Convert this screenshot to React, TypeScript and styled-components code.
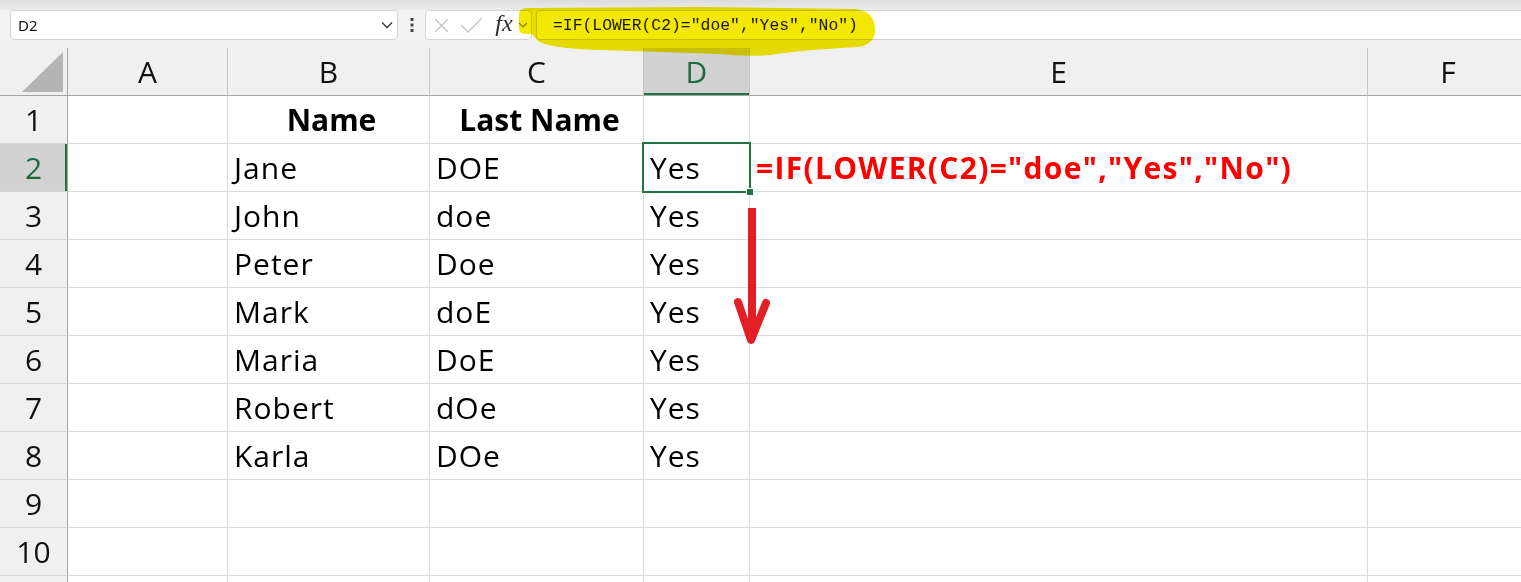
import React from "react";
import styled, { createGlobalStyle } from "styled-components";

const GlobalStyle = createGlobalStyle`
  html, body { margin: 0; padding: 0; background: #ffffff; }
  body { overflow: hidden; }
  * { box-sizing: border-box; }
`;

const Page = styled.div`
  position: relative;
  width: 1521px;
  height: 582px;
  overflow: hidden;
  background: #f0f0f0;
`;

const TopBand = styled.div`
  height: 10px;
  background: linear-gradient(#dcdcdc, #ececec);
`;

const FormulaBar = styled.div`
  display: flex;
  align-items: stretch;
  height: 30px;
  background: #f3f3f3;
`;

const NameBox = styled.div`
  margin-left: 10px;
  width: 388px;
  display: flex;
  align-items: center;
  justify-content: space-between;
  padding: 0 4px 0 7px;
  background: #ffffff;
  border: 1px solid #d4d4d4;
  border-radius: 4px;
  font-family: "Noto Sans", "Open Sans", sans-serif;
  font-size: 15px;
  color: #111;
`;

const Dots = styled.div`
  width: 27px;
  display: flex;
  align-items: center;
  justify-content: center;
`;

const FxGroup = styled.div`
  width: 107px;
  display: flex;
  align-items: center;
  padding-left: 7px;
  background: #ffffff;
  border: 1px solid #d4d4d4;
  border-radius: 4px;
`;

const FxIcon = styled.span<{ $w: number }>`
  width: ${(p) => p.$w}px;
  flex: none;
  display: flex;
  align-items: center;
  justify-content: center;
`;

const FxText = styled.span`
  font-family: "Liberation Serif", "DejaVu Serif", serif;
  font-style: italic;
  font-size: 24px;
  color: #2b2b2b;
  width: 22px;
  flex: none;
  text-align: center;
  line-height: 1;
  margin-top: -4px;
`;

const FormulaInput = styled.div`
  flex: 1;
  margin-left: 4px;
  background: #ffffff;
  border-top: 1px solid #d0d0d0;
  border-bottom: 1px solid #d0d0d0;
  border-left: 1px solid #d0d0d0;
  border-radius: 4px 0 0 4px;
  display: flex;
  align-items: center;
  padding-left: 16px;
  font-family: "Liberation Mono", "DejaVu Sans Mono", monospace;
  font-size: 16.4px;
  color: #1a1a1a;
  white-space: pre;
`;

const Spacer = styled.div`
  height: 8px;
  background: #f0f0f0;
`;

const Sheet = styled.div`
  display: grid;
  grid-template-columns: 68px 160px 202px 214px 106px 618px 1fr;
  grid-auto-rows: 48px;
  background: #ffffff;
  font-family: "Open Sans", "Noto Sans", sans-serif;
  font-size: 30px;
  color: #000;
`;

const Corner = styled.div`
  background: #f0f0f0;
  border-right: 1px solid #a6a6a6;
  border-bottom: 1px solid #a6a6a6;
  display: flex;
  align-items: flex-end;
  justify-content: flex-end;
  padding: 0 4px 3px 0;
`;

const ColHeader = styled.div<{ $active?: boolean; $last?: boolean }>`
  background: ${(p) => (p.$active ? "#d2d2d2" : "#f0f0f0")};
  color: ${(p) => (p.$active ? "#1e6b41" : "#111")};
  border-right: ${(p) => (p.$last ? "none" : "1px solid #c6c6c6")};
  border-bottom: 1px solid #a6a6a6;
  box-shadow: ${(p) => (p.$active ? "inset 0 -2px 0 #217346" : "none")};
  padding-left: ${(p) => (p.$last ? "7px" : "0")};
  text-align: center;
  line-height: 47px;
`;

const RowHeader = styled.div<{ $active?: boolean }>`
  background: ${(p) => (p.$active ? "#d2d2d2" : "#f0f0f0")};
  color: ${(p) => (p.$active ? "#1e6b41" : "#111")};
  border-right: 1px solid #a6a6a6;
  border-bottom: 1px solid #d4d4d4;
  box-shadow: ${(p) => (p.$active ? "inset -2px 0 0 #217346" : "none")};
  text-align: center;
  line-height: 47px;
`;

const Cell = styled.div<{
  $bold?: boolean;
  $center?: boolean;
  $selected?: boolean;
  $red?: boolean;
  $last?: boolean;
}>`
  position: relative;
  border-right: ${(p) => (p.$last ? "none" : "1px solid #dadada")};
  border-bottom: 1px solid #dadada;
  padding: 0 0 0 6px;
  line-height: 47px;
  white-space: nowrap;
  overflow: visible;
  font-weight: ${(p) => (p.$bold || p.$red ? 700 : 400)};
  text-align: ${(p) => (p.$center ? "center" : "left")};
  color: ${(p) => (p.$red ? "#ff0000" : "#000")};
  letter-spacing: ${(p) => (p.$red ? "1.3px" : p.$bold ? "0px" : "1px")};
  z-index: ${(p) => (p.$selected ? 2 : "auto")};
  ${(p) =>
    p.$selected
      ? `
    &::after {
      content: "";
      position: absolute;
      left: -2px;
      top: -2px;
      right: -2px;
      bottom: -2px;
      border: 2px solid #217346;
      pointer-events: none;
    }
    &::before {
      content: "";
      position: absolute;
      right: -4px;
      bottom: -4px;
      width: 6px;
      height: 6px;
      background: #217346;
      box-shadow: 0 0 0 1px #ffffff;
      z-index: 3;
    }
  `
      : ""}
`;

const Overlay = styled.svg`
  position: absolute;
  left: 0;
  top: 0;
  pointer-events: none;
`;

const HighlightOverlay = styled(Overlay)`
  mix-blend-mode: multiply;
`;

type Row = { n: number; label: string; b: string; c: string; d: string; e?: string };

const rows: Row[] = [
  { n: 1, label: "1", b: "Name", c: "Last Name", d: "" },
  { n: 2, label: "2", b: "Jane", c: "DOE", d: "Yes", e: '=IF(LOWER(C2)="doe","Yes","No")' },
  { n: 3, label: "3", b: "John", c: "doe", d: "Yes" },
  { n: 4, label: "4", b: "Peter", c: "Doe", d: "Yes" },
  { n: 5, label: "5", b: "Mark", c: "doE", d: "Yes" },
  { n: 6, label: "6", b: "Maria", c: "DoE", d: "Yes" },
  { n: 7, label: "7", b: "Robert", c: "dOe", d: "Yes" },
  { n: 8, label: "8", b: "Karla", c: "DOe", d: "Yes" },
  { n: 9, label: "9", b: "", c: "", d: "" },
  { n: 10, label: "10", b: "", c: "", d: "" },
  { n: 11, label: "", b: "", c: "", d: "" },
];

const cols = ["A", "B", "C", "D", "E", "F"];

export default function App() {
  return (
    <>
      <GlobalStyle />
      <Page>
        <TopBand />
        <FormulaBar>
          <NameBox>
            <span>D2</span>
            <svg width="12" height="8" viewBox="0 0 12 8">
              <path d="M1 1.5 L6 6.5 L11 1.5" fill="none" stroke="#333" strokeWidth="1.3" />
            </svg>
          </NameBox>
          <Dots>
            <svg width="4" height="16" viewBox="0 0 4 16">
              <rect x="0.5" y="1" width="3" height="3" fill="#444" />
              <rect x="0.5" y="6.5" width="3" height="3" fill="#444" />
              <rect x="0.5" y="12" width="3" height="3" fill="#444" />
            </svg>
          </Dots>
          <FxGroup>
            <FxIcon $w={16}>
              <svg width="15" height="15" viewBox="0 0 15 15">
                <path d="M1 1 L14 14 M14 1 L1 14" stroke="#c4c4c4" strokeWidth="1.3" />
              </svg>
            </FxIcon>
            <FxIcon $w={44}>
              <svg width="23" height="16" viewBox="0 0 23 16">
                <path d="M1 8 L8 15 L22 1" fill="none" stroke="#c4c4c4" strokeWidth="1.3" />
              </svg>
            </FxIcon>
            <FxText>fx</FxText>
            <FxIcon $w={16}>
              <svg width="10" height="6" viewBox="0 0 10 6">
                <path d="M1 1 L5 5 L9 1" fill="none" stroke="#8a8a8a" strokeWidth="1.1" />
              </svg>
            </FxIcon>
          </FxGroup>
          <FormulaInput>=IF(LOWER(C2)="doe","Yes","No")</FormulaInput>
        </FormulaBar>
        <Spacer />
        <Sheet>
          <Corner>
            <svg width="41" height="40" viewBox="0 0 41 40">
              <polygon points="0,40 41,40 41,0" fill="#b4b4b4" />
            </svg>
          </Corner>
          {cols.map((c, i) => (
            <ColHeader key={c} $active={c === "D"} $last={i === cols.length - 1}>
              {c}
            </ColHeader>
          ))}
          {rows.map((r) => (
            <React.Fragment key={r.n}>
              <RowHeader $active={r.n === 2}>{r.label}</RowHeader>
              <Cell />
              <Cell $bold={r.n === 1} $center={r.n === 1}>
                {r.b}
              </Cell>
              <Cell $bold={r.n === 1} $center={r.n === 1}>
                {r.c}
              </Cell>
              <Cell $selected={r.n === 2}>{r.d}</Cell>
              <Cell $red={!!r.e}>{r.e}</Cell>
              <Cell $last />
            </React.Fragment>
          ))}
        </Sheet>
        <HighlightOverlay width="1521" height="80" viewBox="0 0 1521 80">
          <path
            d="M519,14 Q519,8 528,8 L700,7 L855,9 Q874,11 875,28 Q876,44 858,47 Q800,50 770,55 Q745,57 720,54 L600,50 Q545,48 537,40 L532,34 L524,34 Q519,33 519,28 Z"
            fill="#f3e800"
          />
        </HighlightOverlay>
        <Overlay width="1521" height="582" viewBox="0 0 1521 582">
          <g stroke="#e31e24" strokeWidth="8" strokeLinecap="round" strokeLinejoin="round" fill="none">
            <path d="M752,208 L752,336" strokeLinecap="butt" />
            <path d="M738,302 L751,340 L766,303" />
          </g>
        </Overlay>
      </Page>
    </>
  );
}
